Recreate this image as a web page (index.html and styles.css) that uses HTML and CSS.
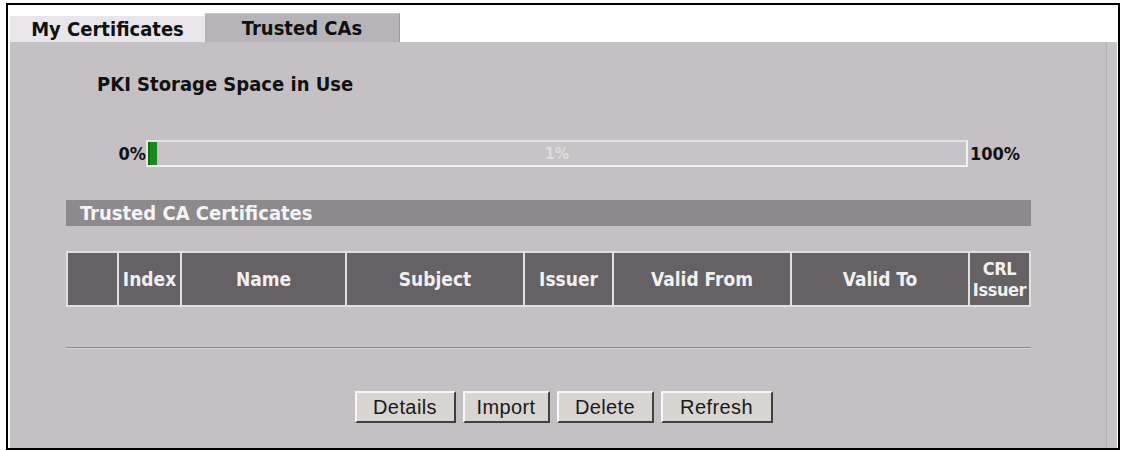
FILE: index.html
```html
<!DOCTYPE html>
<html>
<head>
<meta charset="utf-8">
<link rel="stylesheet" href="styles.css">
</head>
<body>
<div class="frame">
  <div class="tabs">
    <div class="tab tab-other">My Certificates</div>
    <div class="tab tab-active">Trusted CAs</div>
  </div>
  <div class="panel">
    <div class="content">
      <div class="pki-title">PKI Storage Space in Use</div>
      <div class="bar-row">
        <div class="bar-label-left">0%</div>
        <div class="bar">
          <div class="bar-fill" style="width: 9px;"></div>
          <div class="bar-text">1%</div>
        </div>
        <div class="bar-label-right">100%</div>
      </div>
      <div class="section-head">Trusted CA Certificates</div>
      <div class="table">
        <div class="th"></div>
        <div class="th">Index</div>
        <div class="th">Name</div>
        <div class="th">Subject</div>
        <div class="th">Issuer</div>
        <div class="th">Valid From</div>
        <div class="th">Valid To</div>
        <div class="th th-crl">CRL<br>Issuer</div>
      </div>
      <div class="rule"></div>
    </div>
    <div class="buttons">
      <button class="btn btn-details">Details</button>
      <button class="btn btn-import">Import</button>
      <button class="btn btn-delete">Delete</button>
      <button class="btn btn-refresh">Refresh</button>
    </div>
  </div>
</div>
</body>
</html>
```
FILE: styles.css
```css
html, body {
  margin: 0;
  padding: 0;
  background: #ffffff;
}
body {
  width: 1123px;
  height: 451px;
  overflow: hidden;
  font-family: "Liberation Sans", Arial, sans-serif;
}
.frame {
  box-sizing: border-box;
  margin: 3px 0 0 6px;
  width: 1114px;
  height: 447px;
  border: 2px solid #000;
  background: #fff;
  padding: 0 1px 0 2px;
  display: flex;
  flex-direction: column;
}
.tabs {
  height: 37px;
  display: flex;
  align-items: flex-end;
}
.tab,
.pki-title,
.bar-label-left,
.bar-label-right,
.bar-text,
.section-head,
.th {
  font-family: "DejaVu Sans Condensed", "DejaVu Sans", sans-serif;
  font-stretch: condensed;
  font-weight: bold;
}
.tab {
  box-sizing: border-box;
  width: 195px;
  display: flex;
  align-items: center;
  justify-content: center;
  font-size: 20px;
  color: #111;
}
.tab-other {
  height: 26px;
  background: #e8e6ea;
}
.tab-active {
  height: 29px;
  background: #b6b4b8;
  border-right: 1px solid #9c9a9e;
  border-top: 1px solid #c8c6ca;
}
.panel {
  flex: 1;
  background: #c4c0c4;
  border-right: 10px solid #c8c4c8;
  box-shadow: inset -1px 0 0 #b4b0b4;
  display: flex;
  flex-direction: column;
}
.content {
  margin-left: 56px;
  width: 965px;
  display: flex;
  flex-direction: column;
}
.pki-title {
  margin-top: 31px;
  margin-left: 31px;
  height: 22px;
  line-height: 22px;
  font-size: 20px;
  color: #111;
}
.bar-row {
  margin-top: 45px;
  display: flex;
  align-items: center;
  height: 27px;
}
.bar-label-left {
  width: 80px;
  text-align: right;
  font-size: 18px;
  color: #111;
}
.bar-label-right {
  margin-left: 2px;
  font-size: 18px;
  color: #111;
}
.bar {
  position: relative;
  box-sizing: border-box;
  width: 822px;
  height: 27px;
  border: 2px solid #f2f0f2;
  border-top-color: #e4e2e4;
  border-left-color: #e8e6e8;
  background: #c7c3c7;
  display: flex;
  align-items: center;
  justify-content: center;
}
.bar-fill {
  position: absolute;
  left: 0;
  top: 0;
  bottom: 0;
  background: #1a8a1c;
  box-shadow: inset 2px 0 0 #0e6e10;
}
.bar-text {
  font-size: 16px;
  color: #dedcde;
}
.section-head {
  margin-top: 33px;
  height: 26px;
  background: #8d898d;
  color: #f4f4f4;
  font-size: 20px;
  line-height: 26px;
  padding-left: 14px;
}
.table {
  margin-top: 25px;
  box-sizing: border-box;
  height: 56px;
  padding: 2px;
  background: #e2dee2;
  display: grid;
  grid-template-columns: 49px 61px 163px 176px 87px 176px 176px 59px;
  column-gap: 2px;
}
.th {
  background: #656165;
  color: #f0f0f0;
  font-size: 19px;
  line-height: 21px;
  display: flex;
  align-items: center;
  justify-content: center;
  text-align: center;
}
.th-crl {
  font-size: 18px;
  letter-spacing: -0.4px;
}
.rule {
  margin-top: 40px;
  height: 1px;
  background: #8c888c;
  border-bottom: 1px solid #d6d2d6;
}
.buttons {
  margin-top: 42px;
  display: flex;
  justify-content: center;
  gap: 7px;
  padding-left: 10px;
}
.btn {
  box-sizing: border-box;
  height: 32px;
  padding: 0;
  font-family: "Liberation Sans", Arial, sans-serif;
  font-size: 20px;
  letter-spacing: 0.4px;
  color: #1a1a1a;
  background: #d8d5d2;
  border: 2px solid;
  border-color: #f8f8f8 #404040 #404040 #f8f8f8;
}
.btn-details { width: 101px; }
.btn-import { width: 87px; }
.btn-delete { width: 97px; }
.btn-refresh { width: 112px; }
```
